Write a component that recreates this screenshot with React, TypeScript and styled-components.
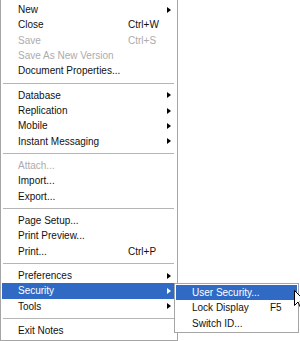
import React from 'react'
import styled, { createGlobalStyle, css } from 'styled-components'

const GlobalStyle = createGlobalStyle`
  html, body {
    margin: 0;
    padding: 0;
    background: #ffffff;
  }
  body {
    font-family: "Liberation Sans", Arial, sans-serif;
    font-size: 10px;
    color: #000000;
    overflow: hidden;
  }
`

const Screen = styled.div`
  position: relative;
  width: 300px;
  height: 341px;
`

const Menu = styled.div`
  box-sizing: border-box;
  width: 178px;
  height: 341px;
  padding: 2px 2px 0 1px;
  border: 1px solid #a5a5a5;
  border-top: none;
  background: #ffffff;
  display: flex;
  flex-direction: column;
`

const SubMenu = styled.div`
  position: absolute;
  left: 174px;
  top: 283px;
  box-sizing: border-box;
  width: 125px;
  height: 50px;
  padding: 1px;
  border: 1px solid #a5a5a5;
  background: #ffffff;
  display: flex;
  flex-direction: column;
`

const Row = styled.div<{ $active?: boolean; $disabled?: boolean; $indent: number }>`
  display: flex;
  align-items: center;
  height: 15.33px;
  flex: none;
  padding-left: ${(p) => p.$indent}px;
  padding-right: 4px;
  white-space: nowrap;
  color: ${(p) => (p.$disabled ? '#acabae' : '#111111')};
  ${(p) =>
    p.$active &&
    css`
      background: #316ac5;
      color: #ffffff;
    `}
`

const Label = styled.span<{ $width: number }>`
  flex: none;
  width: ${(p) => p.$width}px;
`

const Shortcut = styled.span`
  flex: 1;
`

const Arrow = styled.span<{ $active?: boolean }>`
  width: 0;
  height: 0;
  border-top: 3.5px solid transparent;
  border-bottom: 3.5px solid transparent;
  border-left: 4px solid ${(p) => (p.$active ? '#ffffff' : '#000000')};
`

const Separator = styled.div`
  flex: none;
  height: 9px;
  display: flex;
  align-items: center;
  padding: 0 1px;

  &::after {
    content: '';
    flex: 1;
    height: 1px;
    background: #b5b5b5;
  }
`

const Cursor = styled.svg`
  position: absolute;
  left: 294px;
  top: 290px;
`

type Entry =
  | { sep: true }
  | { sep?: false; label: string; key?: string; sub?: boolean; disabled?: boolean; active?: boolean }

const fileMenu: Entry[] = [
  { label: 'New', sub: true },
  { label: 'Close', key: 'Ctrl+W' },
  { label: 'Save', key: 'Ctrl+S', disabled: true },
  { label: 'Save As New Version', disabled: true },
  { label: 'Document Properties...' },
  { sep: true },
  { label: 'Database', sub: true },
  { label: 'Replication', sub: true },
  { label: 'Mobile', sub: true },
  { label: 'Instant Messaging', sub: true },
  { sep: true },
  { label: 'Attach...', disabled: true },
  { label: 'Import...' },
  { label: 'Export...' },
  { sep: true },
  { label: 'Page Setup...' },
  { label: 'Print Preview...' },
  { label: 'Print...', key: 'Ctrl+P' },
  { sep: true },
  { label: 'Preferences', sub: true },
  { label: 'Security', sub: true, active: true },
  { label: 'Tools', sub: true },
  { sep: true },
  { label: 'Exit Notes' },
]

const securityMenu: Entry[] = [
  { label: 'User Security...', active: true },
  { label: 'Lock Display', key: 'F5' },
  { label: 'Switch ID...' },
]

const renderEntries = (entries: Entry[], indent: number, labelWidth: number) =>
  entries.map((e, i) =>
    e.sep ? (
      <Separator key={i} />
    ) : (
      <Row key={i} $indent={indent} $active={e.active} $disabled={e.disabled}>
        <Label $width={labelWidth}>{e.label}</Label>
        <Shortcut>{e.key}</Shortcut>
        {e.sub && <Arrow $active={e.active} />}
      </Row>
    )
  )

const App = () => {
  return (
    <>
      <GlobalStyle />
      <Screen>
        <Menu>{renderEntries(fileMenu, 16, 110)}</Menu>
        {/* file menu */}
        <SubMenu>{renderEntries(securityMenu, 16, 78)}</SubMenu>
        {/* security submenu */}
        <Cursor width="12" height="19" viewBox="0 0 12 19">
          <path
            d="M0.5 0.5 L0.5 15.5 L4 12 L6.5 17.5 L8.5 16.5 L6 11 L11 11 Z"
            fill="#ffffff"
            stroke="#000000"
            strokeWidth="1"
          />
        </Cursor>
      </Screen>
    </>
  )
}

export default App
